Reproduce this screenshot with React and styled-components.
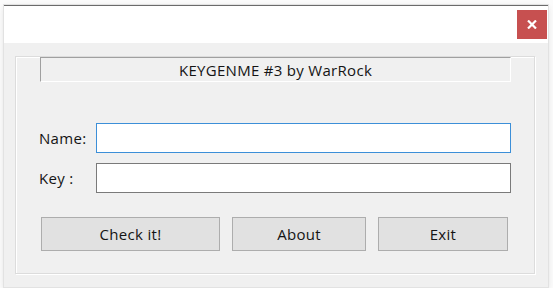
import React from 'react';
import styled, { createGlobalStyle } from 'styled-components';

const GlobalStyle = createGlobalStyle`
  html, body {
    margin: 0;
    padding: 0;
    background: #ffffff;
  }
  body {
    font-family: "Open Sans", "Noto Sans", sans-serif;
  }
`;

const Page = styled.div`
  width: 553px;
  height: 288px;
  padding: 5px 0 0 4px;
  box-sizing: border-box;
  background: #fbfbfb;
`;

const Window = styled.div`
  width: 544px;
  height: 282px;
  display: flex;
  flex-direction: column;
  background: #f0f0f0;
  border-top: 1px solid #6b6b6b;
  box-sizing: border-box;
  box-shadow: 0 0 0 1px #e2e2e2, 0 2px 6px rgba(0, 0, 0, 0.12);
`;

const TitleBar = styled.div`
  height: 37px;
  flex: none;
  display: flex;
  justify-content: flex-end;
  align-items: flex-start;
  padding: 4px 1px 0 0;
  box-sizing: border-box;
  background: #ffffff;
`;

const CloseButton = styled.button`
  width: 30px;
  height: 29px;
  border: none;
  padding: 0;
  background: #c75050;
  color: #ffffff;
  display: flex;
  align-items: center;
  justify-content: center;
  cursor: pointer;
`;

const Body = styled.div`
  flex: 1;
  padding: 13px 13px 13px 11px;
  box-sizing: border-box;
  display: flex;
`;

const GroupBox = styled.div`
  flex: 1;
  display: flex;
  flex-direction: column;
  border: 1px solid #dcdcdc;
  box-shadow: inset 1px 1px 0 #ffffff, 1px 1px 0 #ffffff;
  padding: 0 23px 0 23px;
`;

const Text = styled.span`
  font-size: 15px;
  color: #141414;
  letter-spacing: 0.3px;
`;

const Banner = styled.div`
  height: 25px;
  margin: 0 0 0 1px;
  box-sizing: border-box;
  border-top: 1px solid #a0a0a0;
  border-left: 1px solid #a0a0a0;
  border-bottom: 1px solid #ffffff;
  border-right: 1px solid #ffffff;
  display: flex;
  align-items: center;
  justify-content: center;
  padding-top: 1px;
`;

const Form = styled.div`
  display: grid;
  grid-template-columns: 57px 1fr;
  row-gap: 10px;
  margin-top: 41px;
  align-items: center;
`;

const Input = styled.input`
  height: 30px;
  box-sizing: border-box;
  margin: 0;
  border: 1px solid ${(p) => (p.$focused ? '#3c8fd8' : '#7a7a7a')};
  background: #ffffff;
  outline: none;
  font-family: inherit;
  font-size: 15px;
`;

const ButtonRow = styled.div`
  display: flex;
  gap: 12px;
  margin: 24px 0 0 2px;
`;

const Button = styled.button`
  width: ${(p) => p.$width}px;
  height: 34px;
  box-sizing: border-box;
  border: 1px solid #adadad;
  background: #e1e1e1;
  font-family: inherit;
  padding: 0;
`;

export default function App() {
  return (
    <>
      <GlobalStyle />
      <Page>
        <Window>
          <TitleBar>
            <CloseButton aria-label="Close">
              <svg width="10" height="9" viewBox="0 0 10 9">
                <path d="M1 0.5 L9 8.5 M9 0.5 L1 8.5" stroke="#fff" strokeWidth="2.2" />
              </svg>
            </CloseButton>
          </TitleBar>
          <Body>
            <GroupBox>
              <Banner>
                <Text>KEYGENME #3 by WarRock</Text>
              </Banner>
              <Form>
                <Text as="label">Name:</Text>
                <Input $focused />
                <Text as="label">Key :</Text>
                <Input />
              </Form>
              <ButtonRow>
                <Button $width={179}><Text>Check it!</Text></Button>
                <Button $width={134}><Text>About</Text></Button>
                <Button $width={130}><Text>Exit</Text></Button>
              </ButtonRow>
            </GroupBox>
          </Body>
        </Window>
      </Page>
    </>
  );
}
